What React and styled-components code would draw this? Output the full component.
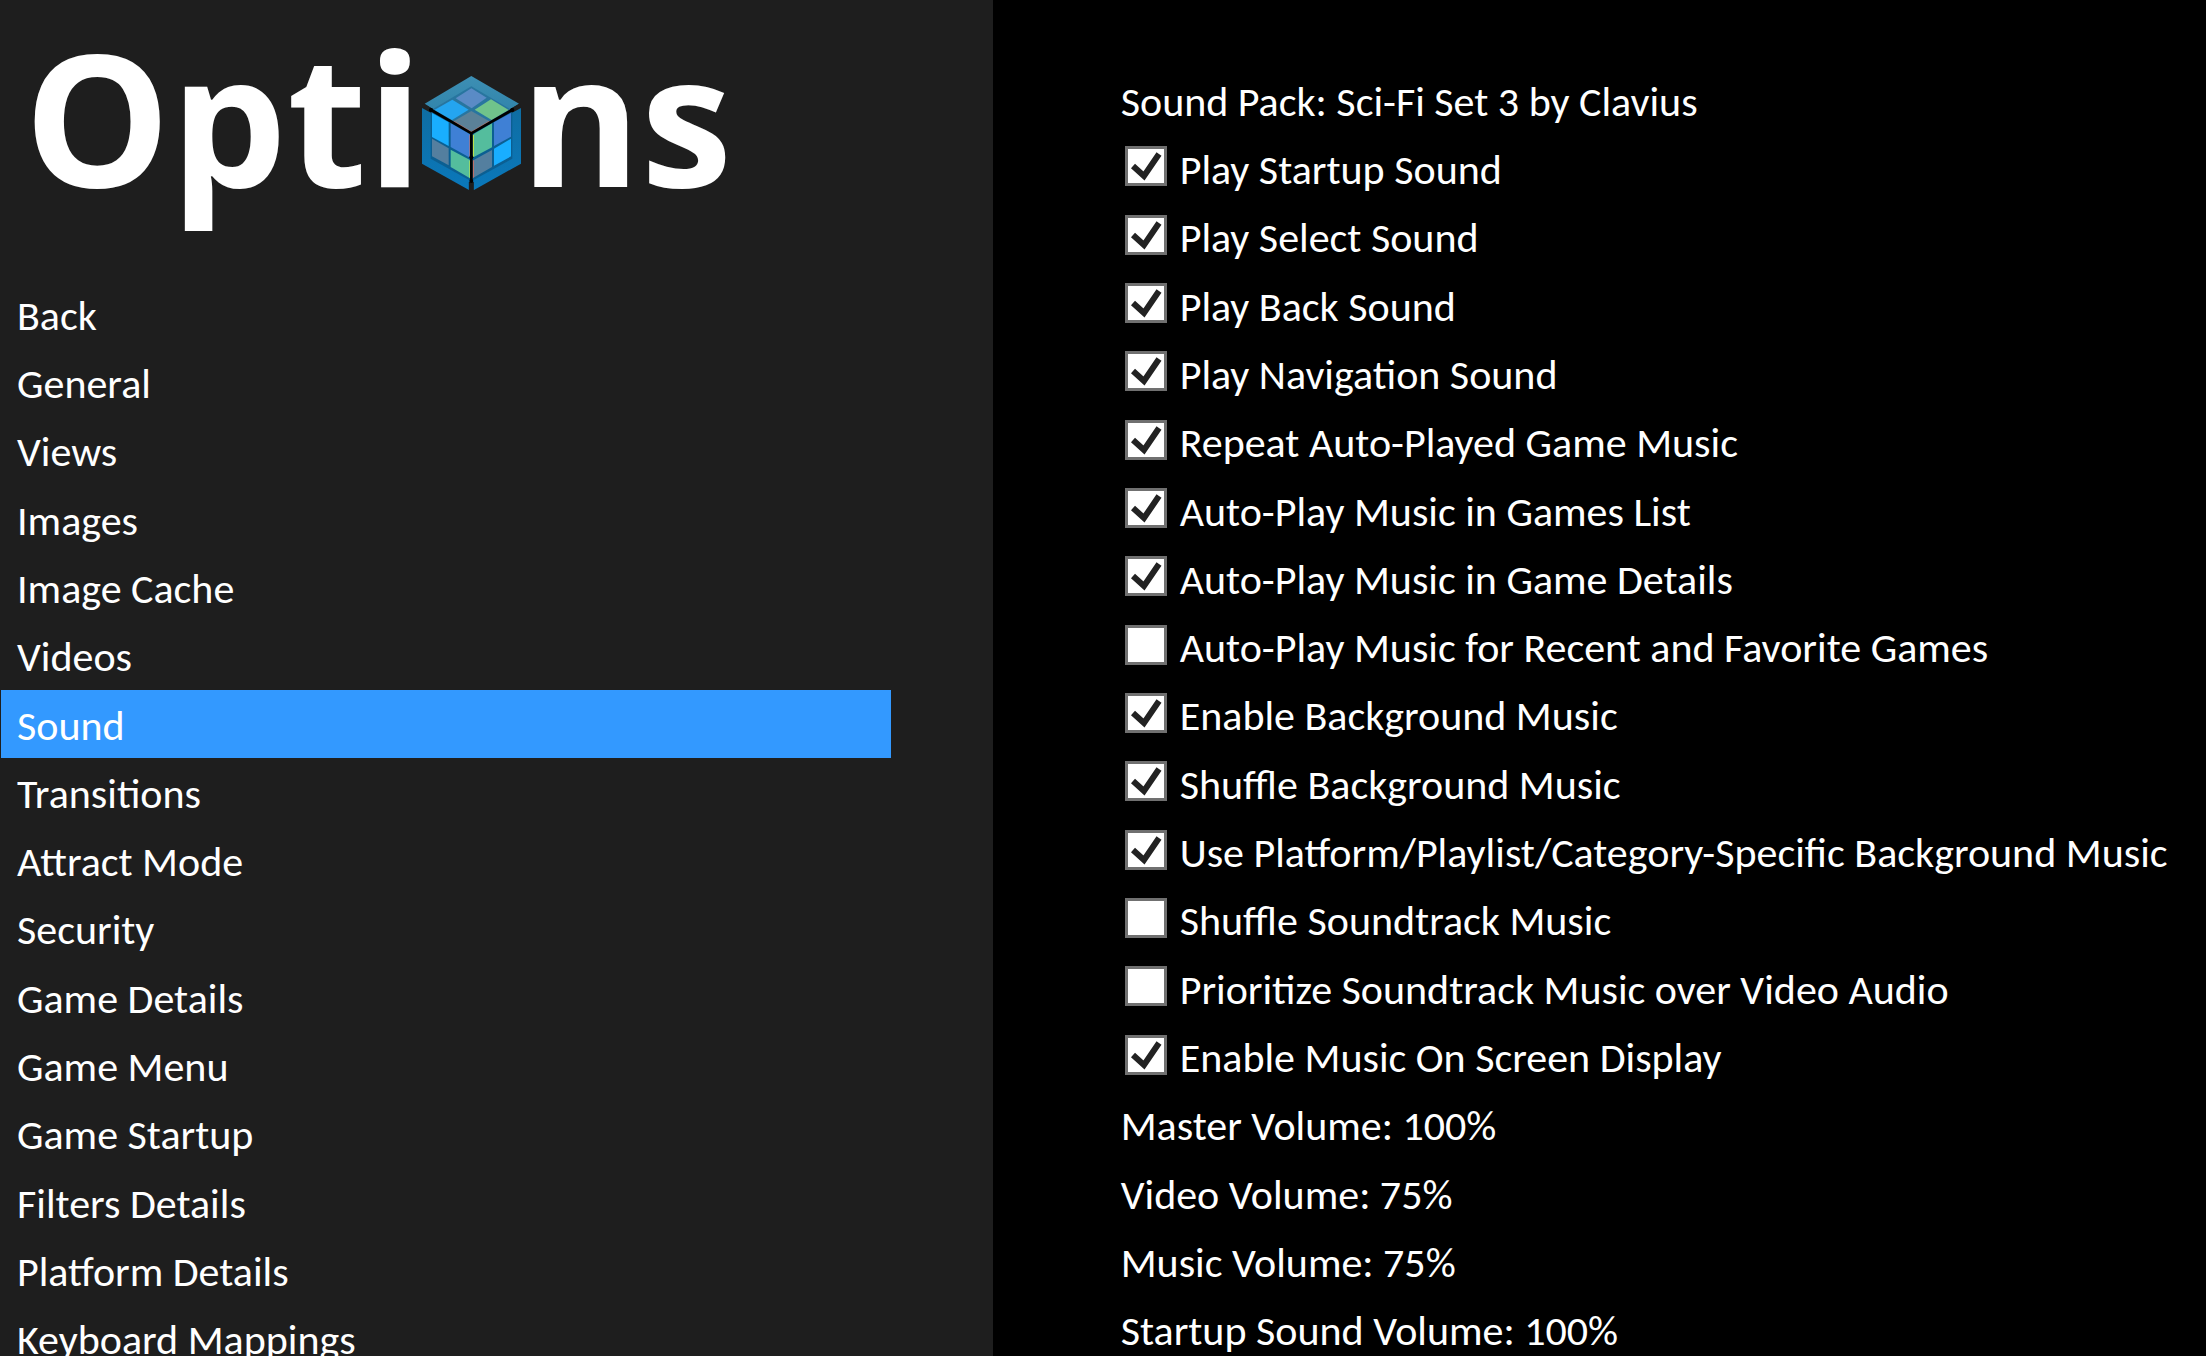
import React, { useState } from 'react';
import styled, { createGlobalStyle } from 'styled-components';

const menuItems = [
    'Back',
    'General',
    'Views',
    'Images',
    'Image Cache',
    'Videos',
    'Sound',
    'Transitions',
    'Attract Mode',
    'Security',
    'Game Details',
    'Game Menu',
    'Game Startup',
    'Filters Details',
    'Platform Details',
    'Keyboard Mappings',
];

const toggles = [
    { label: 'Play Startup Sound', on: true },
    { label: 'Play Select Sound', on: true },
    { label: 'Play Back Sound', on: true },
    { label: 'Play Navigation Sound', on: true },
    { label: 'Repeat Auto-Played Game Music', on: true },
    { label: 'Auto-Play Music in Games List', on: true },
    { label: 'Auto-Play Music in Game Details', on: true },
    { label: 'Auto-Play Music for Recent and Favorite Games', on: false },
    { label: 'Enable Background Music', on: true },
    { label: 'Shuffle Background Music', on: true },
    { label: 'Use Platform/Playlist/Category-Specific Background Music', on: true },
    { label: 'Shuffle Soundtrack Music', on: false },
    { label: 'Prioritize Soundtrack Music over Video Audio', on: false },
    { label: 'Enable Music On Screen Display', on: true },
];

const volumes = [
    'Master Volume: 100%',
    'Video Volume: 75%',
    'Music Volume: 75%',
    'Startup Sound Volume: 100%',
];

export default function App() {
    const [active, setActive] = useState('Sound');

    return (
        <>
            <GlobalStyle />
            <Screen>
                <Sidebar>
                    <Title>
                        Opti<Cube />ns
                    </Title>
                    <Menu>
                        {menuItems.map(item => (
                            <MenuItem key={item} $active={item === active} onClick={() => setActive(item)}>
                                {item}
                            </MenuItem>
                        ))}
                    </Menu>
                </Sidebar>
                <Settings>
                    <SettingList>
                        <Setting>Sound Pack: Sci-Fi Set 3 by Clavius</Setting>
                        {toggles.map(item => (
                            <Toggle key={item.label}>
                                <Check type="checkbox" defaultChecked={item.on} />
                                {item.label}
                            </Toggle>
                        ))}
                        {volumes.map(item => (
                            <Setting key={item}>{item}</Setting>
                        ))}
                    </SettingList>
                </Settings>
            </Screen>
        </>
    );
}

function Cube() {
    return (
        <CubeIcon viewBox="69 52 297 342" aria-hidden="true">
            <defs>
                <linearGradient id="lid" x1="0" y1="0" x2="0" y2="1">
                    <stop offset="0" stopColor="#3d8fb4" />
                    <stop offset="1" stopColor="#2a7ea6" />
                </linearGradient>
                <linearGradient id="side" x1="0" y1="0" x2="0" y2="1">
                    <stop offset="0" stopColor="#0f6da2" />
                    <stop offset="1" stopColor="#0a78bb" />
                </linearGradient>
            </defs>
            {/* outer shell */}
            <path d="M217 52 360 135 217 222 77 135Z" fill="url(#lid)" />
            <path d="M69 148 217 228V394L210 394 69 315Z" fill="url(#side)" />
            <path d="M366 148 217 228V394L225 394 366 315Z" fill="url(#side)" />
            {/* recessed faces */}
            <path d="M217 83 336 153 217 222 98 153Z" fill="#28759f" />
            <path d="M95 158 217 226V368L95 300Z" fill="#0b5f92" />
            <path d="M340 158 217 226V368L340 300Z" fill="#0b5f92" />
            {/* top tiles */}
            <path d="M217 89 263 117 218 149 170 119Z" fill="#5a8bc6" />
            <path d="M160 123 209 153 159 184 106 154Z" fill="#24a5f0" />
            <path d="M276 122 329 154 278 184 227 153Z" fill="#70c38b" />
            <path d="M217 157 271 188 217 221 164 188Z" fill="#5b8198" />
            {/* left tiles */}
            <path d="M99 163 149 191V262L99 235Z" fill="#19aeff" />
            <path d="M155 194 213 227V297L155 265Z" fill="#3f80d5" />
            <path d="M99 240 149 269V320L99 293Z" fill="#547f9f" />
            <path d="M155 273 213 304V359L155 325Z" fill="#54bd9d" />
            {/* right tiles */}
            <path d="M223 227 279 194V266L223 296Z" fill="#54bd9d" />
            <path d="M285 191 336 163V234L285 262Z" fill="#3f80d5" />
            <path d="M223 305 279 274V325L223 357Z" fill="#547f9f" />
            <path d="M285 270 336 240V293L285 321Z" fill="#19aeff" />
            {/* coloured fringe next to the edges */}
            <path d="M164 188 217 220 271 188" fill="none" stroke="#c5705f" strokeWidth="3" />
            <path d="M213 229V297M223 305V357" fill="none" stroke="#d9705f" strokeWidth="3" />
            <path d="M223 229V294M213 306V357" fill="none" stroke="#d8ef3c" strokeWidth="3" />
            <path d="M217 370V394" fill="none" stroke="#1e1e1e" strokeWidth="15" />
            <path d="M70 139 100 157M365 139 335 157" fill="none" stroke="#1e1e1e" strokeWidth="10" />
            <path d="M92 151 217 224 344 151M217 224V370" fill="none" stroke="#000" strokeWidth="8" />
            <circle cx="96" cy="154" r="6" />
            <circle cx="340" cy="154" r="6" />
            <circle cx="217" cy="296" r="6" />
            <circle cx="217" cy="367" r="6" />
        </CubeIcon>
    );
}

const GlobalStyle = createGlobalStyle`
    * {
        box-sizing: border-box;
    }
    body {
        margin: 0;
        background: #000;
        color: #fff;
        font-family: Calibri, Carlito, Lato, sans-serif;
        font-size: 42px;
    }
    button {
        border: 0;
        background: none;
        color: inherit;
        font: inherit;
        text-align: left;
        cursor: pointer;
    }
`;

const Screen = styled.div`
    display: grid;
    grid-template-columns: 45% 1fr;
    height: 100vh;
    overflow: hidden;
`;

const Sidebar = styled.aside`
    display: flex;
    flex-direction: column;
    height: calc(100vh + 17px);
    background: #1e1e1e;
`;

const Title = styled.h1`
    flex: none;
    height: 280px;
    margin: 0;
    padding-left: 24px;
    font-family: "Open Sans", "Noto Sans", sans-serif;
    font-size: 184px;
    font-weight: 700;
    line-height: 232px;
    white-space: nowrap;
`;

const CubeIcon = styled.svg`
    width: 99px;
    height: 114px;
    margin: 0 -1px;
    vertical-align: -3px;
`;

const Menu = styled.nav`
    display: flex;
    flex: 1;
    flex-direction: column;
    margin-right: 102px;
    padding-left: 1px;
`;

const MenuItem = styled.button`
    flex: 1;
    padding: 2px 16px 0;
    background: ${props => (props.$active ? '#3399ff' : 'transparent')};
    white-space: nowrap;
`;

const Settings = styled.main`
    height: calc(100vh + 8px);
    padding: 66px 24px 0 128px;
`;

const SettingList = styled.div`
    display: flex;
    flex-direction: column;
    height: 100%;
`;

const Setting = styled.button`
    flex: 1;
    padding: 2px 0 0;
    white-space: nowrap;
`;

const Toggle = styled.label`
    display: flex;
    flex: 1;
    align-items: center;
    gap: 13px;
    padding: 2px 0 0 4px;
    white-space: nowrap;
    cursor: pointer;
`;

const checkMark = `url("data:image/svg+xml,%3Csvg xmlns='http://www.w3.org/2000/svg' viewBox='0 0 36 34'%3E%3Cpath d='M5 17 16 27 31 5' fill='none' stroke='%23222' stroke-width='6'/%3E%3C/svg%3E")`;

const Check = styled.input`
    appearance: none;
    flex: none;
    width: 42px;
    height: 40px;
    margin: 0 0 6px;
    border: 3px solid #707070;
    background: #fff;
    &:checked {
        background: #fff ${checkMark} center / 100% 100% no-repeat;
    }
`;
